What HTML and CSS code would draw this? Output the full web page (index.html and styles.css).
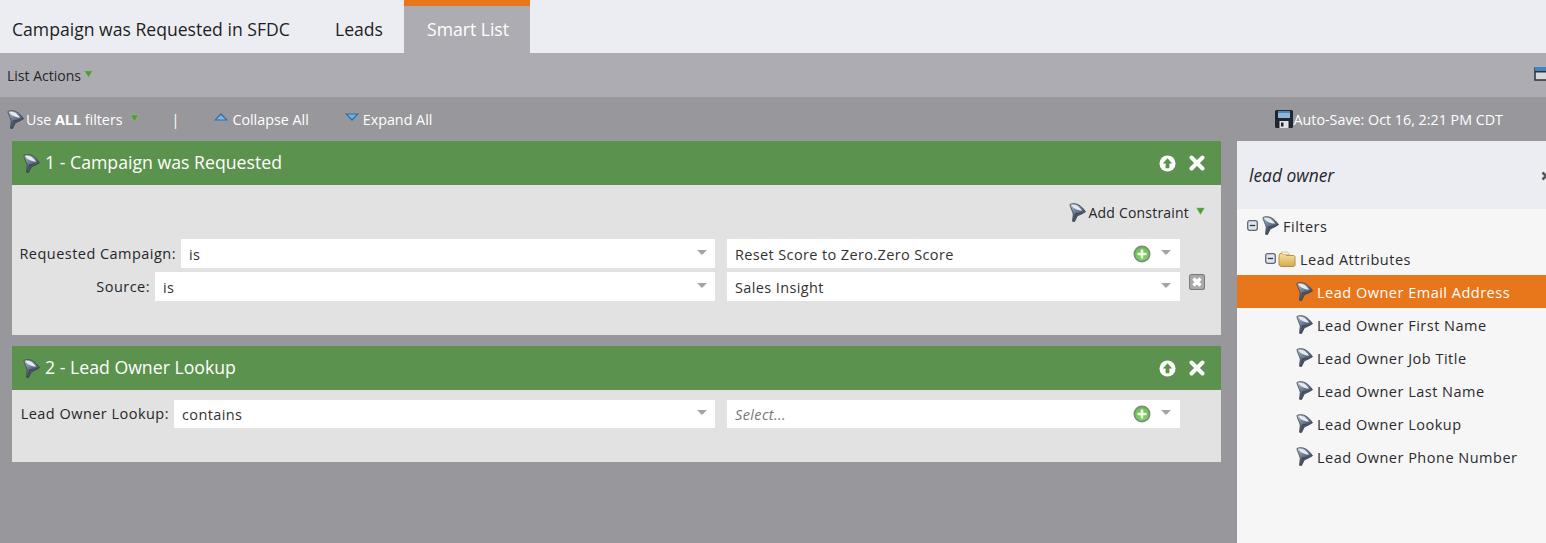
FILE: index.html
```html
<!DOCTYPE html>
<html lang="en">
<head>
<meta charset="utf-8">
<title>Smart List</title>
<link rel="stylesheet" href="styles.css">
</head>
<body>
<svg class="defs" width="0" height="0" aria-hidden="true">
  <defs>
    <linearGradient id="fg" x1="0" y1="0" x2=".7" y2="1">
      <stop offset="0" stop-color="#b9c4d0"/>
      <stop offset=".45" stop-color="#6f7f95"/>
      <stop offset="1" stop-color="#262e3b"/>
    </linearGradient>
    <linearGradient id="fold" x1="0" y1="0" x2="0" y2="1">
      <stop offset="0" stop-color="#f6e3a4"/>
      <stop offset="1" stop-color="#d9a94a"/>
    </linearGradient>
    <linearGradient id="plus" x1="0" y1="0" x2="0" y2="1">
      <stop offset="0" stop-color="#6cc254"/>
      <stop offset="1" stop-color="#7fce68"/>
    </linearGradient>
    <symbol id="funnel" viewBox="0 0 16 18">
      <path d="M.8 1.500C2.500 .3 6 .3 8.500 1.500 11.500 3.200 14 5.800 15.600 8.300 13 10 10 11.300 7.800 12.300L5.200 17.600 3.300 17.300 4 10.500C3 7 1.300 4.500 .8 1.500Z" fill="url(#fg)" stroke="#343c48" stroke-width=".7"/>
      <path d="M2 2C4.500 1.300 7 2 9 3.500 10.500 4.700 11.700 6 12.500 7.300 9.500 7.300 5 6.500 2 2Z" fill="#e6ebf0"/>
      <path d="M5.500 10C7.500 9.800 10 9.300 12.500 8.500 10 10.200 8 11 6.800 11.700L5 15.800Z" fill="#3d4859"/>
    </symbol>
    <symbol id="tri-green" viewBox="0 0 10 9">
      <path d="M.5 1h9L5 8.500Z" fill="#4f9a3d" stroke="#8ccb78" stroke-width=".6"/>
    </symbol>
    <symbol id="add" viewBox="0 0 18 18">
      <circle cx="9" cy="9" r="8.500" fill="#7c8c78"/>
      <circle cx="9" cy="9" r="6.800" fill="url(#plus)"/>
      <path d="M9 4.500v9M4.500 9h9" stroke="#eaf8e4" stroke-width="2.600"/>
    </symbol>
    <symbol id="minus-box" viewBox="0 0 11 11">
      <rect x=".7" y=".7" width="9.600" height="9.600" rx="2" fill="#dfe5ec" stroke="#5d6775" stroke-width="1.300"/>
      <path d="M2.800 5.500h5.400" stroke="#2f3744" stroke-width="1.300"/>
    </symbol>
  </defs>
</svg>

<nav class="tabs">
  <span class="tab tab-first">Campaign was Requested in SFDC</span>
  <span class="tab tab-leads">Leads</span>
  <span class="tab tab-active">Smart List</span>
</nav>

<div class="actions">
  <span class="actions-label">List Actions</span>
  <svg class="tri-s"><use href="#tri-green"/></svg>
  <svg class="window-icon" viewBox="0 0 14 14"><rect x="1" y="1" width="13" height="12" fill="#d8d8dc" stroke="#2f3137" stroke-width="1.500"/><rect x="1" y="0" width="13" height="4" fill="#3f86c4"/><rect x="1" y="4" width="13" height="1.500" fill="#2f3137"/></svg>
</div>

<div class="toolbar">
  <svg class="ico-funnel"><use href="#funnel"/></svg>
  <span class="tool-use">Use <b>ALL</b> filters</span>
  <svg class="tri-s tri-use"><use href="#tri-green"/></svg>
  <span class="tool-sep">|</span>
  <svg class="arrow arrow-up" viewBox="0 0 14 8"><path d="M7 0l7 7.500H0Z" fill="#2f6da6"/><path d="M7 2L11.500 6.500H2.500Z" fill="#7db7e2"/></svg>
  <span class="tool-collapse">Collapse All</span>
  <svg class="arrow arrow-down" viewBox="0 0 14 8"><path d="M0 .5h14L7 8Z" fill="#2f6da6"/><path d="M2.500 1.500h9L7 6Z" fill="#6eb0e0"/></svg>
  <span class="tool-expand">Expand All</span>
  <span class="tool-save">
    <svg class="save-icon" viewBox="0 0 18 18"><rect width="18" height="18" rx="1.500" fill="#20262e"/><rect x="3" y="1" width="12" height="7" fill="#8fb6d8"/><rect x="3" y="1" width="12" height="2" fill="#4b86bd"/><rect x="4.500" y="11" width="9" height="7" fill="#dfe2e6"/><rect x="6" y="12.500" width="2.500" height="4" fill="#20262e"/></svg>
    Auto-Save: Oct 16, 2:21 PM CDT
  </span>
</div>

<div class="workspace">
  <main class="canvas">
    <section class="card card-one">
      <header class="card-head">
        <svg class="ico-funnel"><use href="#funnel"/></svg>
        <h2>1 - Campaign was Requested</h2>
        <svg class="head-up" viewBox="0 0 18 18"><circle cx="9" cy="9" r="8.500" fill="#fff"/><path d="M9 3.500L14 9h-3v5H7V9H4Z" fill="#5b924d"/></svg>
        <svg class="head-x" viewBox="0 0 16 16"><path d="M2.500 2.500l11 11M13.500 2.500l-11 11" stroke="#fff" stroke-width="4" stroke-linecap="round"/></svg>
      </header>
      <div class="card-body body-one">
        <div class="constraint">
          <svg class="ico-funnel"><use href="#funnel"/></svg>
          <span>Add Constraint</span>
          <svg class="tri-s tri-con"><use href="#tri-green"/></svg>
        </div>
        <div class="row row-one">
          <label class="lbl lbl-req">Requested Campaign:</label>
          <div class="field field-op"><span>is</span><i class="caret"></i></div>
          <div class="field field-val"><span>Reset Score to Zero.Zero Score</span><svg class="add"><use href="#add"/></svg><i class="caret"></i></div>
        </div>
        <div class="row row-two">
          <label class="lbl lbl-src">Source:</label>
          <div class="field field-op"><span>is</span><i class="caret"></i></div>
          <div class="field field-val"><span>Sales Insight</span><i class="caret"></i></div>
          <svg class="row-x" viewBox="0 0 16 16"><rect width="16" height="16" rx="2.500" fill="#7b7b7b"/><rect x="1" y="1" width="14" height="14" rx="2" fill="#a9a9a9"/><path d="M4.500 4.500l7 7M11.500 4.500l-7 7" stroke="#fff" stroke-width="3.400"/></svg>
        </div>
      </div>
    </section>

    <section class="card">
      <header class="card-head">
        <svg class="ico-funnel"><use href="#funnel"/></svg>
        <h2>2 - Lead Owner Lookup</h2>
        <svg class="head-up" viewBox="0 0 18 18"><circle cx="9" cy="9" r="8.500" fill="#fff"/><path d="M9 3.500L14 9h-3v5H7V9H4Z" fill="#5b924d"/></svg>
        <svg class="head-x" viewBox="0 0 16 16"><path d="M2.500 2.500l11 11M13.500 2.500l-11 11" stroke="#fff" stroke-width="4" stroke-linecap="round"/></svg>
      </header>
      <div class="card-body body-two">
        <div class="row">
          <label class="lbl lbl-own">Lead Owner Lookup:</label>
          <div class="field field-op"><span>contains</span><i class="caret"></i></div>
          <div class="field field-val"><span class="placeholder">Select...</span><svg class="add"><use href="#add"/></svg><i class="caret"></i></div>
        </div>
      </div>
    </section>
  </main>

  <aside class="side">
    <div class="search"><span>lead owner</span><svg class="search-x" viewBox="0 0 10 10"><path d="M1.500 1.500l7 7M8.500 1.500l-7 7" stroke="#555" stroke-width="2.600"/></svg></div>
    <ul class="tree">
      <li class="node node-root"><svg class="mbox"><use href="#minus-box"/></svg><svg class="ico-funnel"><use href="#funnel"/></svg><span>Filters</span></li>
      <li class="node node-folder"><svg class="mbox"><use href="#minus-box"/></svg><svg class="folder" viewBox="0 0 18 16"><path d="M1 4.500 2 2.500h5l1.500 2H16l1 1v9l-1 1H3L1 14Z" fill="url(#fold)" stroke="#a27f36" stroke-width=".8"/><path d="M3.500 1h6l2 2.500H4Z" fill="#fff6d8" stroke="#b3934a" stroke-width=".5"/></svg><span>Lead Attributes</span></li>
      <li class="node leaf leaf-on"><svg class="ico-funnel"><use href="#funnel"/></svg><span>Lead Owner Email Address</span></li>
      <li class="node leaf"><svg class="ico-funnel"><use href="#funnel"/></svg><span>Lead Owner First Name</span></li>
      <li class="node leaf"><svg class="ico-funnel"><use href="#funnel"/></svg><span>Lead Owner Job Title</span></li>
      <li class="node leaf"><svg class="ico-funnel"><use href="#funnel"/></svg><span>Lead Owner Last Name</span></li>
      <li class="node leaf"><svg class="ico-funnel"><use href="#funnel"/></svg><span>Lead Owner Lookup</span></li>
      <li class="node leaf"><svg class="ico-funnel"><use href="#funnel"/></svg><span>Lead Owner Phone Number</span></li>
    </ul>
  </aside>
</div>
</body>
</html>
```

FILE: styles.css
```css
* { box-sizing: border-box; }
html, body { margin: 0; height: 100%; }
body {
  width: 1546px;
  height: 543px;
  overflow: hidden;
  display: flex;
  flex-direction: column;
  font-family: "Open Sans", sans-serif;
  font-size: 14px;
  color: #26262a;
  background: #98979c;
}
.defs { position: absolute; }

.tabs {
  height: 53px;
  flex: none;
  display: flex;
  background: #ecedf3;
  font-size: 17.6px;
  color: #1e1e22;
}
.tab { display: flex; align-items: center; height: 53px; }
.tab-first { padding: 4px 0 0 12px; width: 335px; }
.tab-leads { width: 69px; padding-top: 4px; }
.tab-active {
  width: 126px;
  padding: 0 0 2px 23px;
  background: #adacb2;
  border-top: 6px solid #e8761a;
  color: #fff;
}

.actions {
  height: 44px;
  flex: none;
  display: flex;
  align-items: center;
  padding-left: 7px;
  background: #adacb2;
}
.actions-label { color: #26262a; }
.tri-s { width: 9px; height: 8px; flex: none; }
.actions .tri-s { margin: -2px 0 0 3px; }
.window-icon { width: 14px; height: 14px; margin-left: auto; margin-right: -2px; margin-top: -2px; }

.toolbar {
  height: 44px;
  flex: none;
  display: flex;
  align-items: center;
  padding-left: 7px;
  font-size: 14.3px;
  color: #fff;
  background: #98979c;
}
.ico-funnel { width: 17px; height: 19px; flex: none; margin-right: -1px; }
.tool-use { margin-left: 3px; }
.tri-use { margin: -2px 0 0 7px; }
.tool-sep { margin-left: 33px; }
.arrow { width: 14px; height: 8px; flex: none; }
.arrow-up { margin: -4px 0 0 35px; }
.tool-collapse { margin-left: 4px; }
.arrow-down { margin: -4px 0 0 36px; }
.tool-expand { margin-left: 4px; }
.tool-save { margin-left: auto; margin-right: 43px; display: flex; align-items: center; }
.save-icon { width: 18px; height: 18px; margin-right: 1px; }

.workspace { flex: 1; display: flex; min-height: 0; }
.canvas {
  flex: none;
  width: 1237px;
  padding-left: 12px;
  display: flex;
  flex-direction: column;
  gap: 11px;
}
.card { width: 1209px; background: #e2e2e2; }
.card-head {
  height: 44px;
  display: flex;
  align-items: center;
  padding: 0 16px 0 11px;
  background: #5b924d;
  color: #fff;
}
.card-head h2 { margin: -2px 0 0 6px; font-size: 17.7px; font-weight: 400; }
.head-up { width: 17px; height: 17px; margin-left: auto; }
.head-x { width: 16px; height: 16px; margin-left: 13px; }

.body-one { height: 150px; position: relative; padding-top: 18px; }
.body-two { height: 72px; padding-top: 10px; }
.constraint {
  height: 18px;
  display: flex;
  align-items: center;
  justify-content: flex-end;
  padding-right: 16px;
  letter-spacing: .2px;
}
.constraint span { margin-left: 3px; }
.tri-con { margin: -2px 0 0 7px; }

.row { display: flex; align-items: center; }
.row-one { margin-top: 18px; height: 29px; }
.row-two { margin-top: 4px; height: 29px; }
.row > .field { height: 100%; }
.body-two .row { height: 28px; }
.lbl { flex: none; text-align: right; margin-right: 5px; font-size: 14.5px; letter-spacing: .47px; }
.lbl-own { margin-top: -2px; }
.lbl-req { width: 164px; }
.lbl-src { width: 138px; }
.lbl-own { width: 157px; }
.field {
  display: flex;
  align-items: center;
  background: #fff;
  color: #333;
  font-size: 14.5px;
  letter-spacing: .37px;
  padding-left: 8px;
}
.field span { flex: 1; padding-top: 2px; }
.body-two .field span { padding-top: 0; }
.field-op { flex: 1; padding-right: 8px; margin-right: 12px; }
.field-val { flex: none; width: 453px; padding-right: 9px; margin-right: 41px; }
.placeholder { font-style: italic; color: #777; }
.caret {
  width: 0;
  height: 0;
  flex: none;
  border-left: 5.5px solid transparent;
  border-right: 5.5px solid transparent;
  border-top: 5.5px solid #a3a3a8;
  margin-top: -3px;
  margin-left: 10px;
}
.field .add { width: 18px; height: 18px; flex: none; }
.row-x { position: absolute; left: 1177px; top: 89px; width: 16px; height: 16px; }

.side { flex: 1; background: #f6f6f6; display: flex; flex-direction: column; min-width: 0; overflow: hidden; }
.search {
  height: 68px;
  flex: none;
  display: flex;
  align-items: center;
  padding-left: 12px;
  background: #ecedf3;
  font-size: 17.4px;
  font-style: italic;
  color: #26262a;
  white-space: nowrap;
}
.search-x { width: 10px; height: 10px; flex: none; margin-left: auto; margin-right: -5px; margin-top: 2px; }
.tree { list-style: none; margin: 0; padding: 0; font-size: 14.5px; letter-spacing: .5px; }
.node { height: 33px; display: flex; align-items: center; white-space: nowrap; color: #2b2b30; }
.node span { padding-top: 2px; }
.mbox { width: 11px; height: 11px; flex: none; }
.node-root { padding-left: 10px; }
.node-root .ico-funnel { margin-left: 4px; }
.node-root span { margin-left: 5px; }
.node-folder { padding-left: 28px; }
.folder { width: 18px; height: 16px; flex: none; margin-left: 2px; }
.node-folder span { margin-left: 4px; }
.leaf { padding-left: 59px; }
.leaf span { margin-left: 5px; }
.leaf-on { background: #e8761a; color: #fff; }
```
